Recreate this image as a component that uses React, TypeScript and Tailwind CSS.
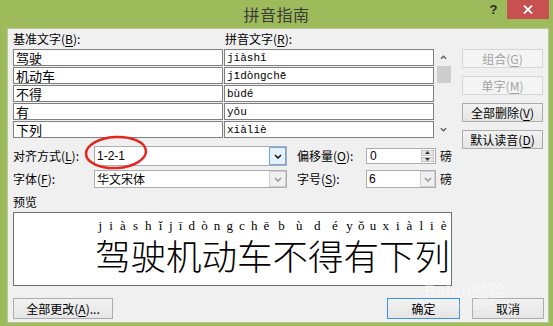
import React from 'react';

const UI = "font-['Noto_Sans_CJK_SC',sans-serif]";

const rows = [
  ['驾驶', 'jiàshǐ'],
  ['机动车', 'jīdòngchē'],
  ['不得', 'bùdé'],
  ['有', 'yǒu'],
  ['下列', 'xiàliè'],
];

const words = [
  { py: 'jiàshǐ', hz: '驾驶' },
  { py: 'jīdòngchē', hz: '机动车' },
  { py: 'bùdé', hz: '不得' },
  { py: 'yǒu', hz: '有' },
  { py: 'xiàliè', hz: '下列' },
];

function Key({ k }: { k: string }) {
  return (
    <>
      (<span className="underline underline-offset-2">{k}</span>)
    </>
  );
}

function Chevron({ up, color = '#1e1e1e', w = 8 }: { up?: boolean; color?: string; w?: number }) {
  return (
    <svg width={w} height="5" viewBox="0 0 8 5">
      <polyline
        points={up ? '1,4 4,1 7,4' : '1,1 4,4 7,1'}
        fill="none"
        stroke={color}
        strokeWidth="1.6"
      />
    </svg>
  );
}

function Btn({
  children,
  disabled,
  primary,
  className = '',
}: {
  children: React.ReactNode;
  disabled?: boolean;
  primary?: boolean;
  className?: string;
}) {
  const look = disabled
    ? 'border-[#d5d5d5] bg-[#f4f4f4] text-[#a3a3a3]'
    : primary
    ? 'border-[#3c94e0] bg-gradient-to-b from-[#f2f2f2] to-[#e5e5e5] text-black'
    : 'border-[#acacac] bg-gradient-to-b from-[#f2f2f2] to-[#e5e5e5] text-black';
  return (
    <div className={`flex items-center justify-center border text-[12px] leading-[14px] ${look} ${className}`}>
      {children}
    </div>
  );
}

function Combo({
  value,
  focused,
  className = '',
  arrowW = 17,
}: {
  value: string;
  focused?: boolean;
  className?: string;
  arrowW?: number;
}) {
  return (
    <div className={`flex border border-[#abadb3] bg-white ${className}`}>
      <div className="flex-1 pl-[2px] flex items-center text-[12px] leading-[14px] text-black">{value}</div>
      <div
        className={`flex items-center justify-center border ${
          focused ? 'border-[#6fa8dc] bg-[#e5f1fb]' : 'border-[#d0d0d0] bg-[#f0f0f0]'
        }`}
        style={{ width: arrowW }}
      >
        <Chevron color={focused ? '#1a1a1a' : '#9a9a9a'} />
      </div>
    </div>
  );
}

export default function App() {
  return (
    <div className={`relative w-[553px] h-[326px] bg-[#9dbb5a] flex flex-col ${UI}`}>
      {/* title bar */}
      <div className="h-[28px] flex shrink-0">
        <div className="w-[73px]" />
        <div className="flex-1 text-center text-[16px] leading-[28px] text-[#3a3a3a] tracking-[0.5px]">拼音指南</div>
        <div className="w-[73px] flex items-start pr-[4px]">
          <div className="w-[27px] h-[19px] flex items-center justify-center text-[13px] font-bold text-[#2c2c2c] font-['Liberation_Sans',sans-serif]">
            ?
          </div>
          <div className="w-[42px] h-[19px] bg-[#c75050] flex items-center justify-center">
            <svg width="10" height="9" viewBox="0 0 10 9">
              <path d="M1 0.5 L9 8.5 M9 0.5 L1 8.5" stroke="white" strokeWidth="1.8" />
            </svg>
          </div>
        </div>
      </div>

      {/* dialog body */}
      <div className="flex-1 ml-[7px] mr-[4px] mb-[3px] bg-[#f0f0f0] border border-[#b7c99a] pl-[5px] pr-[4px] pt-[3px] flex flex-col text-[12px] leading-[14px] text-black">
        <div className="flex">
          {/* left column */}
          <div className="w-[439px] flex flex-col">
            <div className="flex h-[14px]">
              <div className="w-[212px]">
                基准文字<Key k="B" />:
              </div>
              <div>
                拼音文字<Key k="R" />:
              </div>
            </div>

            <div className="mt-[3px] flex">
              <div className="w-[421px] flex flex-col gap-[1px]">
                {rows.map(([hz, py]) => (
                  <div key={hz} className="flex gap-[1px] h-[17px]">
                    <div className="w-[210px] border border-[#7f7f7f] bg-white pl-[2px] flex items-center text-[13px]">
                      {hz}
                    </div>
                    <div className="w-[210px] border border-[#7f7f7f] bg-white pl-[2px] flex items-center text-[11px] font-['Liberation_Mono',monospace]">
                      {py}
                    </div>
                  </div>
                ))}
              </div>
              <div className="ml-[1px] w-[17px] h-[89px] flex flex-col">
                <div className="h-[17px] flex items-center justify-center">
                  <Chevron up color="#606060" w={7} />
                </div>
                <div className="h-[17px] ml-[2px] mr-[1px] bg-[#cdcdcd]" />
                <div className="flex-1" />
                <div className="h-[17px] flex items-center justify-center">
                  <Chevron color="#606060" w={7} />
                </div>
              </div>
            </div>

            <div className="mt-[8px] h-[20px] flex items-center">
              <div className="w-[81px]">
                对齐方式<Key k="L" />:
              </div>
              <Combo value="1-2-1" focused className="w-[193px] h-[20px] font-['Liberation_Sans',sans-serif]" />
              <div className="ml-[10px] w-[69px]">
                偏移量<Key k="O" />:
              </div>
              <div className="w-[70px] h-[16px] flex border border-[#abadb3] bg-white">
                <div className="flex-1 pl-[3px] flex items-center font-['Liberation_Sans',sans-serif]">0</div>
                <div className="w-[15px] flex flex-col gap-[1px] p-[1px]">
                  <div className="flex-1 bg-[#e6e6e6] border border-[#c4c4c4] flex items-center justify-center">
                    <svg width="5" height="3" viewBox="0 0 5 3">
                      <polygon points="0,3 2.5,0 5,3" fill="#333" />
                    </svg>
                  </div>
                  <div className="flex-1 bg-[#e6e6e6] border border-[#c4c4c4] flex items-center justify-center">
                    <svg width="5" height="3" viewBox="0 0 5 3">
                      <polygon points="0,0 2.5,3 5,0" fill="#333" />
                    </svg>
                  </div>
                </div>
              </div>
              <div className="ml-[4px]">磅</div>
            </div>

            <div className="mt-[4px] h-[18px] flex items-center">
              <div className="w-[81px]">
                字体<Key k="F" />:
              </div>
              <Combo value="华文宋体" className="w-[193px] h-[18px]" />
              <div className="ml-[10px] w-[69px]">
                字号<Key k="S" />:
              </div>
              <Combo value="6" arrowW={15} className="w-[70px] h-[18px] font-['Liberation_Sans',sans-serif]" />
              <div className="ml-[4px]">磅</div>
            </div>

            <div className="mt-[7px] h-[14px]">预览</div>

            <div className="mt-[3px] h-[74px] border border-[#6e6e6e] bg-white overflow-hidden flex justify-end pr-[1px]">
              {words.map((w) => (
                <div key={w.hz} className="flex flex-col shrink-0">
                  <div className="h-[14px] mt-[6px] flex justify-around text-[13px] leading-[14px] font-['Liberation_Serif',serif] text-black">
                    {Array.from(w.py).map((c, i) => (
                      <span key={i}>{c}</span>
                    ))}
                  </div>
                  <div className="mt-[4px] h-[36px] text-[35.5px] leading-[36px] font-light text-black whitespace-nowrap">
                    {w.hz}
                  </div>
                </div>
              ))}
            </div>
          </div>

          {/* right column buttons */}
          <div className="ml-[10px] mt-[17px] w-[81px] flex flex-col gap-[8px]">
            <Btn disabled className="h-[19px]">
              组合<Key k="G" />
            </Btn>
            <Btn disabled className="h-[19px]">
              单字<Key k="M" />
            </Btn>
            <Btn className="h-[19px]">
              全部删除<Key k="V" />
            </Btn>
            <Btn className="h-[19px]">
              默认读音<Key k="D" />
            </Btn>
          </div>
        </div>

        {/* bottom buttons */}
        <div className="mt-[12px] h-[21px] flex">
          <Btn className="w-[100px]">
            全部更改<Key k="A" />...
          </Btn>
          <div className="flex-1" />
          <Btn primary className="w-[73px]">
            确定
          </Btn>
          <Btn className="w-[72px] ml-[12px]">取消</Btn>
        </div>
      </div>

      {/* red annotation circle */}
      <svg className="absolute left-[83px] top-[134px]" width="68" height="38" viewBox="0 0 68 38">
        <ellipse cx="33" cy="18.5" rx="30" ry="15.5" fill="none" stroke="#e4261f" strokeWidth="2.5" transform="rotate(-3 33 18.5)" />
      </svg>

      {/* watermark */}
      <div className="absolute left-[424px] top-[281px] text-[17px] leading-[18px] font-bold text-white/40 font-['Liberation_Sans',sans-serif] pointer-events-none">
        Baidu<span className={UI}>经验</span>
      </div>
      <div className="absolute left-[434px] top-[300px] text-[10px] leading-[12px] text-white/30 font-['Liberation_Sans',sans-serif] pointer-events-none">
        jingyan.baidu.com
      </div>
    </div>
  );
}
